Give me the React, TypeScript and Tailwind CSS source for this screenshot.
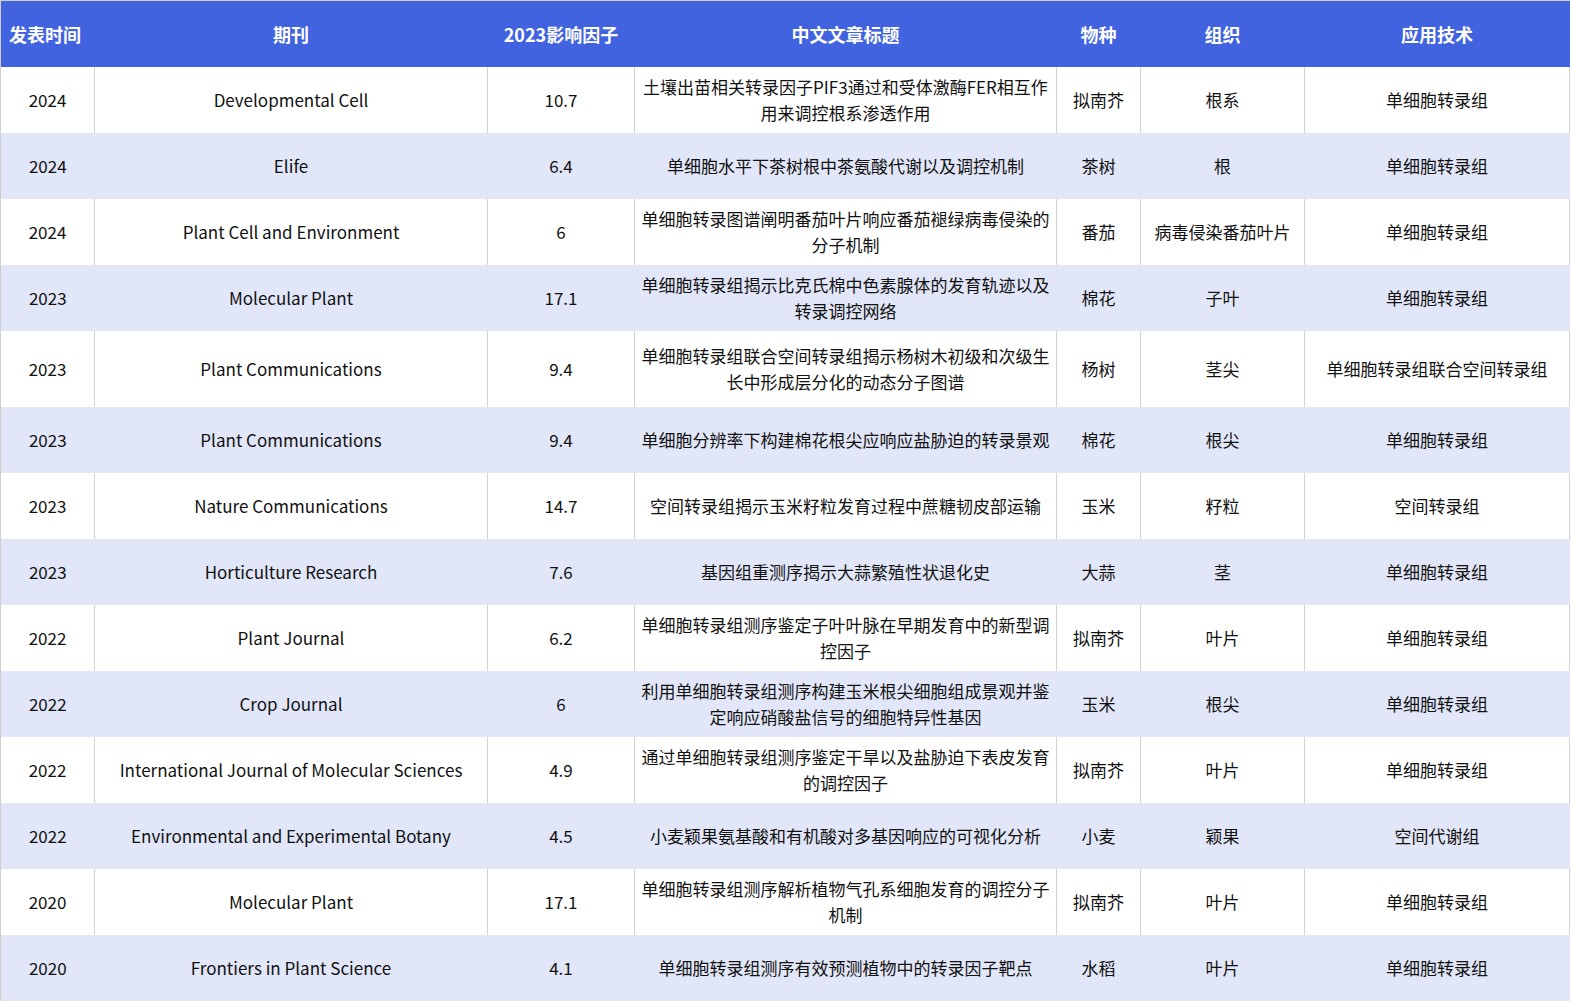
const rows: string[][] = [
["2024","Developmental Cell","10.7","土壤出苗相关转录因子PIF3通过和受体激酶FER相互作用来调控根系渗透作用","拟南芥","根系","单细胞转录组"],
["2024","Elife","6.4","单细胞水平下茶树根中茶氨酸代谢以及调控机制","茶树","根","单细胞转录组"],
["2024","Plant Cell and Environment","6","单细胞转录图谱阐明番茄叶片响应番茄褪绿病毒侵染的分子机制","番茄","病毒侵染番茄叶片","单细胞转录组"],
["2023","Molecular Plant","17.1","单细胞转录组揭示比克氏棉中色素腺体的发育轨迹以及转录调控网络","棉花","子叶","单细胞转录组"],
["2023","Plant Communications","9.4","单细胞转录组联合空间转录组揭示杨树木初级和次级生长中形成层分化的动态分子图谱","杨树","茎尖","单细胞转录组联合空间转录组"],
["2023","Plant Communications","9.4","单细胞分辨率下构建棉花根尖应响应盐胁迫的转录景观","棉花","根尖","单细胞转录组"],
["2023","Nature Communications","14.7","空间转录组揭示玉米籽粒发育过程中蔗糖韧皮部运输","玉米","籽粒","空间转录组"],
["2023","Horticulture Research","7.6","基因组重测序揭示大蒜繁殖性状退化史","大蒜","茎","单细胞转录组"],
["2022","Plant Journal","6.2","单细胞转录组测序鉴定子叶叶脉在早期发育中的新型调控因子","拟南芥","叶片","单细胞转录组"],
["2022","Crop Journal","6","利用单细胞转录组测序构建玉米根尖细胞组成景观并鉴定响应硝酸盐信号的细胞特异性基因","玉米","根尖","单细胞转录组"],
["2022","International Journal of Molecular Sciences","4.9","通过单细胞转录组测序鉴定干旱以及盐胁迫下表皮发育的调控因子","拟南芥","叶片","单细胞转录组"],
["2022","Environmental and Experimental Botany","4.5","小麦颖果氨基酸和有机酸对多基因响应的可视化分析","小麦","颖果","空间代谢组"],
["2020","Molecular Plant","17.1","单细胞转录组测序解析植物气孔系细胞发育的调控分子机制","拟南芥","叶片","单细胞转录组"],
["2020","Frontiers in Plant Science","4.1","单细胞转录组测序有效预测植物中的转录因子靶点","水稻","叶片","单细胞转录组"],
];
const heads = ["发表时间","期刊","2023影响因子","中文文章标题","物种","组织","应用技术"];
const widths = [94,393,147,422,84,164,265];

export default function App() {
  return (
    <div className="w-[1571px] h-[1003px] bg-white text-[#111] text-[17px] leading-[26px]" style={{fontFamily:'"Noto Sans CJK SC", "Noto Sans", sans-serif'}}>
      <table className="border-collapse table-fixed w-[1569px] border-l border-t border-[#cfcfcf]">
        <colgroup>{widths.map((w,i)=><col key={i} style={{width:w}} />)}</colgroup>
        <thead>
          <tr className="h-[66px] bg-[#4163e0] text-white font-bold text-[18px]">
            {heads.map((h,i)=><th key={i} className={i===0?"text-left pl-[8px]":"text-center"}>{h}</th>)}
          </tr>
        </thead>
        <tbody>
          {rows.map((r,ri)=>{
            const alt = ri%2===1;
            return (
              <tr key={ri} className={(ri===4?"h-[76px] ":"h-[66px] ")+(alt?"bg-[#e1e6f8]":"bg-white")}>
                {r.map((c,ci)=>(
                  <td key={ci} className={"text-center align-middle "+(ci===3?"px-[5px] ":"")+(alt?"":"border-r border-[#d4d4d4]")}>{c}</td>
                ))}
              </tr>
            );
          })}
        </tbody>
      </table>
    </div>
  );
}
